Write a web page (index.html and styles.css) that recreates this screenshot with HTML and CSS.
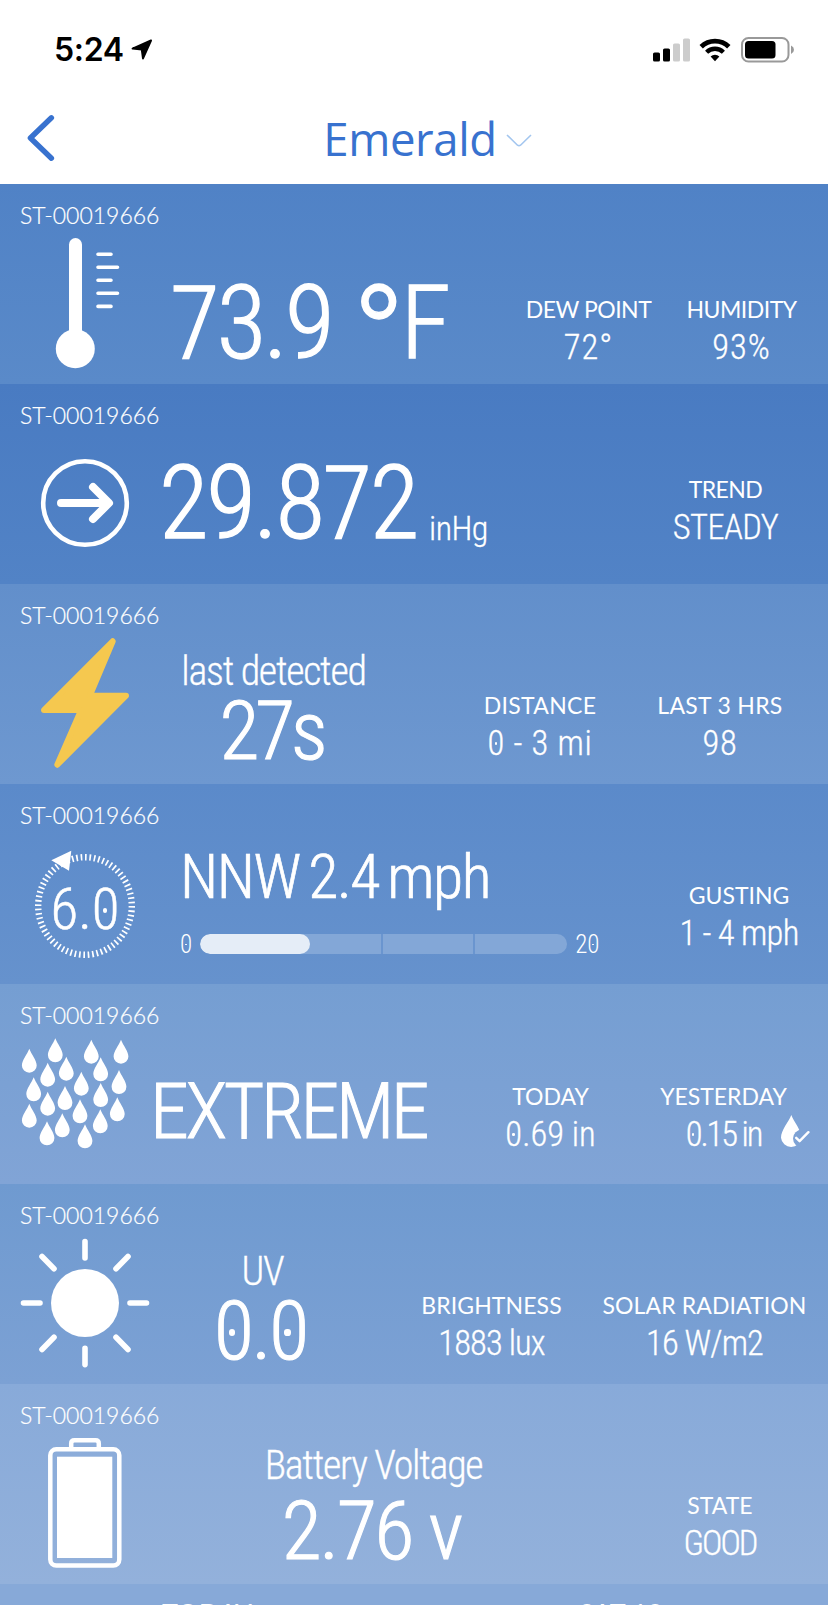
FILE: index.html
```
<!DOCTYPE html>
<html lang="en">

<head>
  <meta charset="UTF-8">
  <meta name="viewport" content="width=device-width, initial-scale=1.0">
  <title>Emerald</title>
  <link rel="stylesheet" href="styles.css">
</head>

<body>
  <header class="header">
    <div class="status-bar">
      <span class="time">5:24</span>
      <svg class="location" width="22" height="21" viewBox="0 0 22 21">
        <path d="M20 1.5 L1.6 9.6 L10.8 10.6 L12 19.4 Z" fill="#000" stroke="#000" stroke-width="2" stroke-linejoin="round" />
      </svg>
      <svg class="signal" width="37" height="24" viewBox="0 0 37 24">
        <rect x="0" y="14.5" width="7" height="9" rx="1.6" />
        <rect x="10" y="10.5" width="7" height="13" rx="1.6" />
        <rect x="20" y="5.5" width="7" height="18" rx="1.6" fill="#ccc" />
        <rect x="30" y="0.5" width="7" height="23" rx="1.6" fill="#ccc" />
      </svg>
      <svg class="wifi" width="32" height="24" viewBox="0 0 32 24">
        <path d="M2.2 8.8 A19.6 19.6 0 0 1 29.8 8.8" fill="none" stroke="#000" stroke-width="4.8" />
        <path d="M7.6 14.2 A12 12 0 0 1 24.4 14.2" fill="none" stroke="#000" stroke-width="4.4" />
        <path d="M11.6 18.6 A6.4 6.4 0 0 1 20.4 18.6 L16 23.2 Z" />
      </svg>
      <svg class="phone-battery" width="54" height="26" viewBox="0 0 54 26">
        <rect x="1" y="1" width="46.5" height="23.5" rx="6.5" fill="none" stroke="#999" stroke-width="2" />
        <rect x="4" y="4" width="30.5" height="17.5" rx="3.5" />
        <path d="M50 8.5 Q53 10 53 12.8 T50 17 Z" fill="#999" />
      </svg>
    </div>
    <nav class="nav">
      <svg class="back" width="28" height="48" viewBox="0 0 28 48">
        <path d="M24.4 3.8 L3.4 24 L24.4 44.2" fill="none" stroke="#3872cf" stroke-width="5.4" stroke-linecap="round" stroke-linejoin="round" />
      </svg>
      <h1 class="title">Emerald</h1>
      <svg class="caret" width="26" height="14" viewBox="0 0 26 14">
        <path d="M1 1 L11.5 11.2 Q13 12.4 14.5 11.2 L25 1" fill="none" stroke="#a3c6ef" stroke-width="1.6" />
      </svg>
    </nav>
  </header>

  <main>
    <section class="row temperature">
      <p class="station">ST-00019666</p>
      <div class="row-body">
        <svg class="icon" viewBox="0 0 150 155">
          <rect x="69" y="9" width="13" height="105" rx="6.5" />
          <circle cx="75.3" cy="119.7" r="19.5" />
          <path class="line" d="M98 25.3H111 M98 38.3H117.5 M98 51.2H111 M98 64.3H117.5 M98 77.4H111" stroke-width="3.6" />
        </svg>
        <p class="reading big">73.9 <span class="degree">°</span>F</p>
        <div class="metric"><span class="label">DEW POINT</span><span class="value">72°</span></div>
        <div class="metric"><span class="label">HUMIDITY</span><span class="value">93%</span></div>
      </div>
    </section>

    <section class="row pressure">
      <p class="station">ST-00019666</p>
      <div class="row-body">
        <svg class="icon" viewBox="0 0 150 155">
          <circle class="line" cx="85" cy="74" r="41.8" stroke-width="4.6" />
          <path class="line" d="M61 74H108 M93 58L109 74L93 90" stroke-width="8" />
        </svg>
        <p class="reading big">29.872<span class="unit">inHg</span></p>
        <div class="metric"><span class="label">TREND</span><span class="value">STEADY</span></div>
      </div>
    </section>

    <section class="row lightning">
      <p class="station">ST-00019666</p>
      <div class="row-body">
        <svg class="icon" viewBox="0 0 150 155">
          <path d="M112.7 12.3L89.8 66.7H126L57.3 135.7L81.2 81H44Z" fill="#f5c84f" stroke="#f5c84f" stroke-width="6" stroke-linejoin="round" />
        </svg>
        <div class="reading stacked">
          <span class="caption">last detected</span>
          <span class="medium">27s</span>
        </div>
        <div class="metric"><span class="label">DISTANCE</span><span class="value"><i class="zero">0</i> - 3 mi</span></div>
        <div class="metric"><span class="label">LAST 3 HRS</span><span class="value">98</span></div>
      </div>
    </section>

    <section class="row wind">
      <p class="station">ST-00019666</p>
      <div class="row-body">
        <div class="dial">
          <svg class="icon" viewBox="0 0 150 155">
            <ellipse class="ticks" cx="85" cy="77" rx="46.8" ry="48.8" pathLength="68" />
            <path d="M51.3 31.3L71.3 21.7L69 41.7Z" />
          </svg>
          <span class="dial-value">6.<i class="zero">0</i></span>
        </div>
        <div class="reading">
          <p class="wind-speed">NNW 2.4 mph</p>
          <div class="scale">
            <span><i class="zero">0</i></span>
            <div class="track">
              <div class="fill" style="width: 30%"></div>
            </div>
            <span>2<i class="zero">0</i></span>
          </div>
        </div>
        <div class="metric"><span class="label">GUSTING</span><span class="value">1 - 4 mph</span></div>
      </div>
    </section>

    <section class="row rain">
      <p class="station">ST-00019666</p>
      <div class="row-body">
        <svg class="icon" viewBox="0 0 150 155">
          <defs>
            <path id="drop" d="M0 0C2 5.5 7.4 11.5 7.4 16.8A7.4 7.2 0 0 1 -7.4 16.8C-7.4 11.5 -2 5.5 0 0Z" />
          </defs>
          <use href="#drop" x="55.3" y="9.3" />
          <use href="#drop" x="91.3" y="10.7" />
          <use href="#drop" x="121" y="10.7" />
          <use href="#drop" x="29.3" y="19.7" />
          <use href="#drop" x="66.3" y="27.7" />
          <use href="#drop" x="100.7" y="28.3" />
          <use href="#drop" x="47.7" y="33.7" />
          <use href="#drop" x="81.3" y="42.7" />
          <use href="#drop" x="119" y="41" />
          <use href="#drop" x="33.7" y="48.3" />
          <use href="#drop" x="65" y="57" />
          <use href="#drop" x="100.7" y="54" />
          <use href="#drop" x="47.7" y="62.7" />
          <use href="#drop" x="80" y="70.3" />
          <use href="#drop" x="117.3" y="68.3" />
          <use href="#drop" x="29.3" y="74.7" />
          <use href="#drop" x="62.3" y="84.3" />
          <use href="#drop" x="100.3" y="80.3" />
          <use href="#drop" x="47" y="92.3" />
          <use href="#drop" x="85" y="95.3" />
        </svg>
        <p class="reading extreme">EXTREME</p>
        <div class="metric"><span class="label">TODAY</span><span class="value"><i class="zero">0</i>.69 in</span></div>
        <div class="metric"><span class="label">YESTERDAY</span><span class="value tight"><i class="zero">0</i>.15 in</span></div>
      </div>
      <svg class="rain-check" width="29" height="34" viewBox="0 0 29 34">
        <mask id="bite">
          <rect width="29" height="34" fill="#fff" />
          <circle cx="21" cy="23.5" r="9" fill="#000" />
        </mask>
        <path d="M10.3 0C13 7 20.3 15 20.3 22.8A10.2 10.2 0 0 1 0 22.8C0 15 7.6 7 10.3 0Z" mask="url(#bite)" />
        <path class="line" d="M15.2 22.8L18.6 26.2L27.4 17.2" stroke-width="2.4" />
      </svg>
    </section>

    <section class="row solar">
      <p class="station">ST-00019666</p>
      <div class="row-body">
        <svg class="icon" viewBox="0 0 150 155">
          <circle cx="85" cy="74" r="34" />
          <path class="line" d="M85 12.5V29 M85 119.2V135.6 M23.5 74H40 M130 74H146.5 M42 27.5L54 39.7 M128 27.5L116 39.7 M42 120.5L54 108.3 M128 120.5L116 108.3" stroke-width="5.6" />
        </svg>
        <div class="reading stacked">
          <span class="caption">UV</span>
          <span class="medium"><i class="zero">0</i>.<i class="zero">0</i></span>
        </div>
        <div class="metric"><span class="label">BRIGHTNESS</span><span class="value">1883 lux</span></div>
        <div class="metric"><span class="label">SOLAR RADIATION</span><span class="value">16 W/m2</span></div>
      </div>
    </section>

    <section class="row battery">
      <p class="station">ST-00019666</p>
      <div class="row-body">
        <svg class="icon" viewBox="0 0 150 155">
          <rect class="line" x="50.3" y="20.3" width="69" height="116.3" rx="6" stroke-width="4.5" />
          <path class="line" d="M71.2 18V14.5Q71.2 11.2 74.5 11.2H95.5Q98.8 11.2 98.8 14.5V18" stroke-width="4.5" />
          <rect x="57" y="27.7" width="55.3" height="101.3" />
        </svg>
        <div class="reading stacked">
          <span class="caption">Battery Voltage</span>
          <span class="medium">2.76 v</span>
        </div>
        <div class="metric"><span class="label">STATE</span><span class="value">GOOD</span></div>
      </div>
    </section>

    <section class="row forecast">
      <span class="day">TODAY</span>
      <span class="day">SAT 10</span>
    </section>
  </main>
</body>

</html>
```
FILE: styles.css
```
* {
  box-sizing: border-box;
  margin: 0;
  padding: 0;
}

body {
  width: 828px;
  height: 1605px;
  overflow: hidden;
  background-color: #fff;
  color: #fff;
  font-family: Roboto, "Liberation Sans", sans-serif;
  font-weight: 300;
  font-stretch: 75%;
}

.header {
  height: 184px;
  color: #000;
}

.status-bar {
  display: flex;
  align-items: center;
  height: 92px;
  padding: 7px 33px 0 54px;
}

.time {
  font: 600 32px/40px Inter, sans-serif;
  letter-spacing: -0.3px;
}

.location {
  margin-left: 7px;
}

.signal {
  margin-left: auto;
}

.wifi {
  margin-left: 9px;
}

.phone-battery {
  margin-left: 10px;
}

.nav {
  display: flex;
  align-items: center;
  justify-content: center;
  height: 92px;
  padding-left: 27px;
}

.back {
  margin-right: auto;
}

.title {
  margin-left: -28px;
  color: #3872cf;
  font: 400 45.5px/60px "Open Sans", sans-serif;
  letter-spacing: -0.4px;
}

.caret {
  margin: 5px auto 0 9px;
}

.row {
  position: relative;
  height: 200px;
  padding-top: 16px;
}

.station {
  height: 29px;
  padding-left: 20px;
  font: 300 23px/30px Lato, sans-serif;
  -webkit-text-stroke: 0.2px #fff;
}

.row-body {
  display: grid;
  height: 155px;
}

.icon {
  display: block;
  width: 150px;
  height: 155px;
  fill: #fff;
}

.line {
  fill: none;
  stroke: #fff;
  stroke-linecap: round;
  stroke-linejoin: round;
}

.reading {
  white-space: nowrap;
}

.big {
  font-size: 102px;
  line-height: 110px;
  letter-spacing: -2.9px;
  -webkit-text-stroke: 1.3px #fff;
}

.stacked {
  display: flex;
  flex-direction: column;
  align-items: center;
  padding-top: 21px;
}

.caption {
  font-size: 40px;
  line-height: 44px;
  letter-spacing: -1.3px;
  -webkit-text-stroke: 0.3px #fff;
}

.medium {
  margin-left: -4px;
  font-size: 82px;
  line-height: 74px;
  letter-spacing: -2.2px;
  -webkit-text-stroke: 1.1px #fff;
}

.metric {
  display: flex;
  flex-direction: column;
  align-items: center;
  gap: 4px;
  white-space: nowrap;
}

.label {
  padding-top: 1px;
  font: 400 23px/30px Lato, sans-serif;
}

.value {
  font-size: 34.5px;
  line-height: 38px;
  -webkit-text-stroke: 0.3px #fff;
}

/* zero with a dot in the middle */
.zero {
  position: relative;
  font-style: normal;
}

.zero::after {
  content: '';
  position: absolute;
  left: 50%;
  top: 50%;
  width: 0.075em;
  height: 0.075em;
  margin: -0.02em 0 0 -0.045em;
  border-radius: 50%;
  background-color: #fff;
}

/* temperature */
.temperature {
  background: linear-gradient(#5082c6, #5a8ac9);
}

.temperature .row-body {
  grid-template-columns: 150px 362px 153px 153px;
}

.temperature .reading {
  padding: 39px 0 0 20px;
}

.degree {
  font-size: 1.4em;
  line-height: 0;
  letter-spacing: -5px;
  vertical-align: -0.2em;
}

.temperature .metric {
  padding-top: 64px;
}

.temperature .label {
  letter-spacing: -0.5px;
}

.temperature .value {
  letter-spacing: 1px;
}

/* pressure */
.pressure {
  background: linear-gradient(#497bc2, #5283c6);
}

.pressure .row-body {
  grid-template-columns: 150px 473px 205px;
}

.pressure .reading {
  padding: 19px 0 0 9px;
  letter-spacing: -2.4px;
}

.unit {
  margin-left: 12px;
  font-size: 34px;
  letter-spacing: -0.6px;
  vertical-align: -2px;
  -webkit-text-stroke-width: 0.3px;
}

.pressure .metric {
  padding-top: 44px;
}

.pressure .label,
.pressure .value {
  letter-spacing: -0.6px;
}

/* lightning */
.lightning {
  background: linear-gradient(#628fcb, #6e98d0);
}

.lightning .row-body {
  grid-template-columns: 150px 247px 53px 180px 180px;
}

.lightning .medium {
  letter-spacing: -4.2px;
}

.lightning .metric {
  padding-top: 60px;
}

.lightning .metric:nth-child(3) {
  grid-column: 4;
}

.lightning .label {
  letter-spacing: 0.3px;
}

.lightning .value {
  letter-spacing: 0.7px;
}

/* wind */
.wind {
  background: linear-gradient(#5b8aca, #6692cd);
}

.wind .row-body {
  grid-template-columns: 150px 500px 178px;
}

.dial {
  display: grid;
}

.dial .icon,
.dial-value {
  grid-area: 1 / 1;
}

.dial-value {
  width: 170px;
  padding-top: 51px;
  text-align: center;
  font-size: 57px;
  line-height: 60px;
  -webkit-text-stroke: 0.5px #fff;
}

.ticks {
  fill: none;
  stroke: #fff;
  stroke-width: 6.4;
  stroke-dasharray: 0.38 0.62;
}

.wind .reading {
  padding: 15px 0 0 30px;
}

.wind-speed {
  font-size: 62px;
  line-height: 66px;
  letter-spacing: -1.5px;
  word-spacing: -4px;
  -webkit-text-stroke: 0.7px #fff;
}

.scale {
  display: flex;
  align-items: center;
  gap: 8px;
  height: 20px;
  margin-top: 24px;
  font-size: 25px;
}

.track {
  width: 367px;
  height: 20px;
  border-radius: 10px;
  overflow: hidden;
  background: linear-gradient(90deg, #83a7d7 181px, #6a95cf 181px 183px, #83a7d7 183px 273px, #6a95cf 273px 275px, #83a7d7 275px);
}

.fill {
  height: 20px;
  border-radius: 10px;
  background-color: #e5edf7;
}

.wind .metric {
  padding-top: 50px;
}

.wind .value {
  letter-spacing: -0.7px;
}

/* rain */
.rain {
  background: linear-gradient(#759ed2, #81a4d6);
}

.rain .row-body {
  grid-template-columns: 150px 314px 173px 173px;
}

.extreme {
  padding-top: 41px;
  font-size: 78px;
  line-height: 84px;
  letter-spacing: -3.4px;
  -webkit-text-stroke: 1px #fff;
}

.rain .metric {
  padding-top: 51px;
}

.value.tight {
  letter-spacing: -2.1px;
}

.rain-check {
  position: absolute;
  right: 18px;
  top: 131px;
  fill: #fff;
}

/* solar */
.solar {
  background: linear-gradient(#6f9ad0, #7ca1d4);
}

.solar .row-body {
  grid-template-columns: 150px 225px 10px 213px 213px;
}

.solar .metric {
  padding-top: 60px;
}

.solar .metric:nth-child(3) {
  grid-column: 4;
}

.solar .label {
  letter-spacing: 0.1px;
}

.solar .value {
  letter-spacing: -0.9px;
}

/* battery */
.battery {
  background: linear-gradient(#88aad9, #93b1db);
}

.battery .row-body {
  grid-template-columns: 150px 447px 33px 180px;
}

.battery .stacked {
  gap: 6px;
  padding-top: 15px;
}

.battery .metric {
  grid-column: 4;
  padding-top: 60px;
}

.battery .value {
  letter-spacing: -2px;
}

/* forecast */
.forecast {
  display: flex;
  height: 21px;
  padding-top: 15px;
  overflow: hidden;
  background-color: #87a9d8;
}

.day {
  width: 414px;
  text-align: center;
  font: 400 27px/30px Lato, sans-serif;
}
```
